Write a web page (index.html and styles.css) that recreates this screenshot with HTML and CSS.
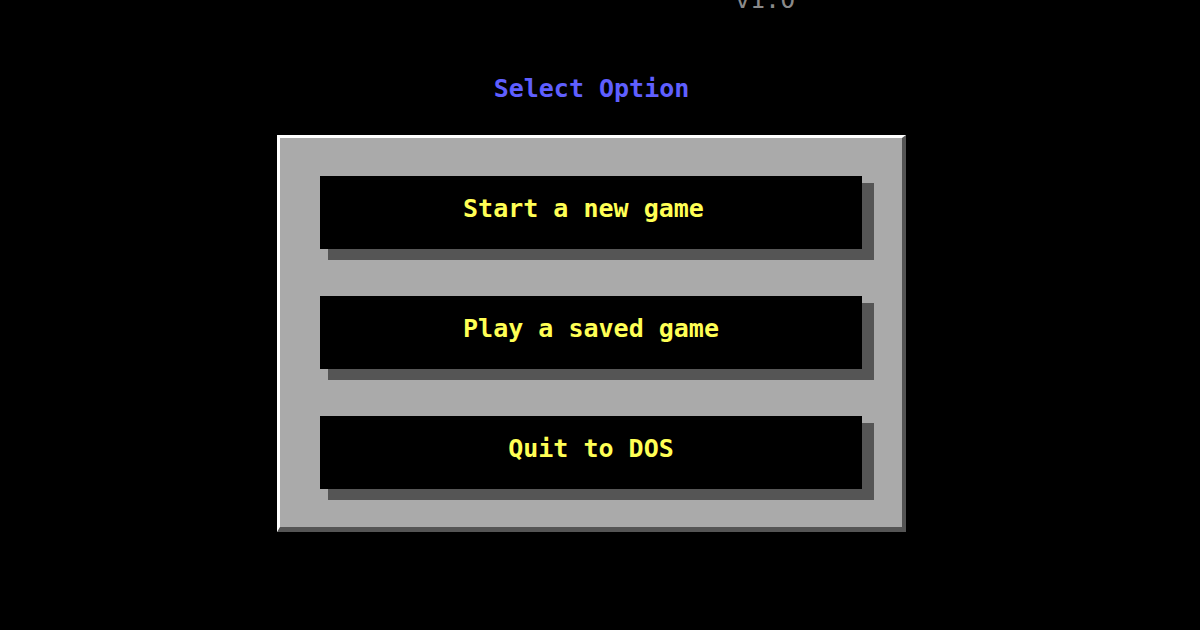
FILE: index.html
```html
<!DOCTYPE html>
<html>
<head>
<meta charset="utf-8">
<link rel="stylesheet" href="styles.css">
</head>
<body>
<div class="screen">
  <div class="version">v1.0</div>
  <div class="title">Select Option</div>
  <div class="panel">
    <div class="option"><span class="label">Start a new game&nbsp;</span></div>
    <div class="option"><span class="label">Play a saved game</span></div>
    <div class="option"><span class="label">Quit to DOS</span></div>
  </div>
</div>
</body>
</html>
```

FILE: styles.css
```css
html, body {
  margin: 0;
  padding: 0;
  background: #000;
  width: 1200px;
  height: 630px;
  overflow: hidden;
}
.screen {
  box-sizing: border-box;
  width: 1200px;
  height: 630px;
  padding-right: 17px;
  display: flex;
  flex-direction: column;
  align-items: center;
  font-family: "DejaVu Sans Mono", "Liberation Mono", monospace;
  font-size: 25px;
  font-weight: bold;
  line-height: 29px;
}
.version {
  align-self: flex-start;
  margin-left: 735px;
  margin-top: -15px;
  color: #8a8a8a;
  font-weight: normal;
  white-space: pre;
}
.title {
  margin-top: 60px;
  color: #5f5fff;
  white-space: pre;
}
.panel {
  margin-top: 32px;
  width: 542px;
  background: #aaaaaa;
  border-top: 3px solid #ffffff;
  border-left: 3px solid #ffffff;
  border-right: 4px solid #555555;
  border-bottom: 5px solid #555555;
  padding: 38px 40px;
  display: flex;
  flex-direction: column;
  gap: 47px;
}
.option {
  background: #000;
  height: 65px;
  padding-bottom: 8px;
  line-height: 65px;
  text-align: center;
  color: #ffff55;
  box-shadow: 10px 9px 0 2px #555555;
}
.label {
  white-space: pre;
}
```
